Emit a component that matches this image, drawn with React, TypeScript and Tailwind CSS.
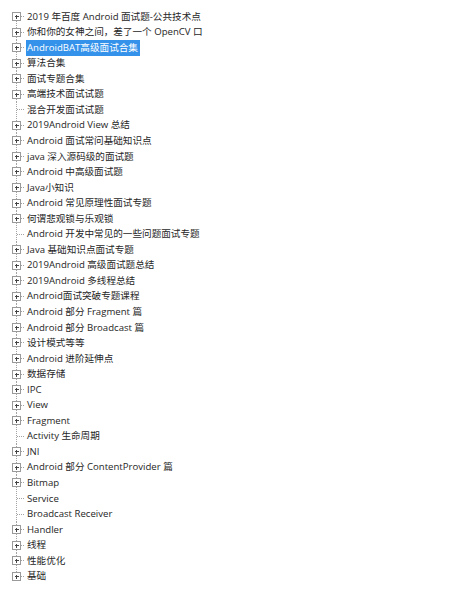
import React from "react";

type Item = { label: string; leaf?: boolean; selected?: boolean };

const items: Item[] = [
  { label: "2019 年百度 Android 面试题-公共技术点" },
  { label: "你和你的女神之间，差了一个 OpenCV 口" },
  { label: "AndroidBAT高级面试合集", selected: true },
  { label: "算法合集" },
  { label: "面试专题合集" },
  { label: "高端技术面试试题" },
  { label: "混合开发面试试题", leaf: true },
  { label: "2019Android View 总结" },
  { label: "Android 面试常问基础知识点" },
  { label: "java 深入源码级的面试题" },
  { label: "Android 中高级面试题" },
  { label: "Java小知识" },
  { label: "Android 常见原理性面试专题" },
  { label: "何谓悲观锁与乐观锁" },
  { label: "Android 开发中常见的一些问题面试专题", leaf: true },
  { label: "Java 基础知识点面试专题" },
  { label: "2019Android 高级面试题总结" },
  { label: "2019Android 多线程总结" },
  { label: "Android面试突破专题课程" },
  { label: "Android 部分 Fragment 篇" },
  { label: "Android 部分 Broadcast 篇" },
  { label: "设计模式等等" },
  { label: "Android 进阶延伸点" },
  { label: "数据存储" },
  { label: "IPC" },
  { label: "View" },
  { label: "Fragment" },
  { label: "Activity 生命周期", leaf: true },
  { label: "JNI" },
  { label: "Android 部分 ContentProvider 篇" },
  { label: "Bitmap" },
  { label: "Service", leaf: true },
  { label: "Broadcast Receiver", leaf: true },
  { label: "Handler" },
  { label: "线程" },
  { label: "性能优化" },
  { label: "基础" },
];

const ROW_H = 15.56;

function Connector({ leaf, first, last }: { leaf?: boolean; first: boolean; last: boolean }) {
  const c = ROW_H / 2;
  const top = first ? c : 0;
  const bottom = last ? c : ROW_H;
  return (
    <svg width="26" height={ROW_H} className="shrink-0" shapeRendering="crispEdges">
      <line x1="16.5" y1={top} x2="16.5" y2={bottom} stroke="#a3a3a3" strokeDasharray="1 1" />
      <line x1={leaf ? 17 : 21} y1={c} x2="25" y2={c} stroke="#a3a3a3" strokeDasharray="1 1" />
      {!leaf && (
        <>
          <rect x="12.5" y={c - 4} width="8" height="8" fill="#fff" stroke="#9a9a9a" />
          <line x1="14.5" y1={c} x2="18.5" y2={c} stroke="#444" />
          <line x1="16.5" y1={c - 2} x2="16.5" y2={c + 2.5} stroke="#444" />
        </>
      )}
    </svg>
  );
}

export default function App() {
  return (
    <div
      className="h-[590px] w-[449px] bg-white pt-[9px] text-[9.6px] text-[#262626]"
      style={{ fontFamily: '"Open Sans", "Noto Sans CJK SC", sans-serif' }}
    >
      {items.map((item, i) => (
        <div key={i} className="flex h-[15.56px] items-center whitespace-nowrap">
          <Connector leaf={item.leaf} first={i === 0} last={i === items.length - 1} />
          <span
            className={
              item.selected
                ? "flex h-full items-center bg-[#3592ea] pl-[1px] pr-[2px] text-white"
                : "pl-[1px]"
            }
          >
            {item.label}
          </span>
        </div>
      ))}
    </div>
  );
}
